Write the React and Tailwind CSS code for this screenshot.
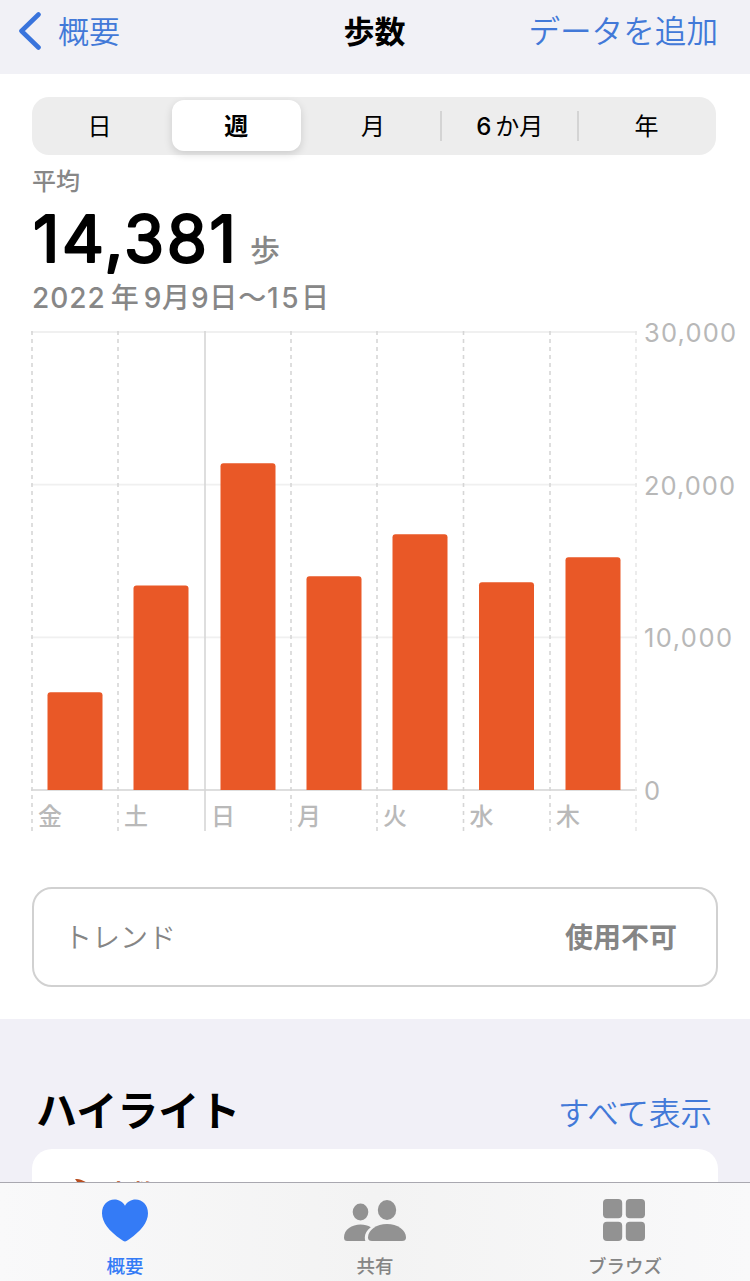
import { useState } from 'react'
import clsx from 'clsx'

const RANGES = ['日', '週', '月', '6か月', '年']

const STEPS = [
  { day: '金', x: 32, value: 6400 },
  { day: '土', x: 118, value: 13400 },
  { day: '日', x: 205, value: 21400, weekStart: true },
  { day: '月', x: 291, value: 14000 },
  { day: '火', x: 377, value: 16750 },
  { day: '水', x: 463.5, value: 13600 },
  { day: '木', x: 550, value: 15250 },
]

const TICKS = [
  { value: 30000, width: 92 },
  { value: 20000, width: 91 },
  { value: 10000, width: 88 },
  { value: 0, width: 16 },
]

const BASE = 478
const toY = (v) => BASE - (v / 30000) * 458

function StepsChart() {
  return (
    <svg width="750" height="528" viewBox="0 0 750 528" className="block overflow-visible font-[Inter,'Noto_Sans_CJK_JP',sans-serif]">
      {/* Grid */}
      {TICKS.map((t) => (
        <line
          key={t.value}
          x1="31" x2="637" y1={toY(t.value)} y2={toY(t.value)}
          stroke={t.value === 0 ? '#dedede' : '#f0f0f0'}
          strokeWidth="1.8"
        />
      ))}
      {STEPS.map((s) => (
        <line
          key={s.day}
          x1={s.x} x2={s.x} y1="19" y2="519"
          stroke="#d6d6d6"
          strokeWidth="1.6"
          strokeDasharray={s.weekStart ? undefined : '4 4'}
        />
      ))}
      <line x1="636" x2="636" y1="19" y2="519" stroke="#e8e8e8" strokeWidth="1.6" strokeDasharray="4 4" />

      {/* Bars */}
      {STEPS.map((s) => {
        const y = toY(s.value)
        return (
          <path
            key={s.day}
            d={`M${s.x + 15.5} ${BASE}V${y + 3}q0-3 3-3h49q3 0 3 3V${BASE}z`}
            fill="#e95827"
          />
        )
      })}

      {/* Labels */}
      {STEPS.map((s) => (
        <text key={s.day} x={s.x + 6} y="513" fontSize="24" fontWeight="500" fill="#b9b9b9">{s.day}</text>
      ))}
      {TICKS.map((t) => (
        <text key={t.value} x="644" y={toY(t.value) + 10} fontSize="25.5" fontWeight="400" textLength={t.width} fill="#b8b8b8">
          {t.value.toLocaleString('en-US')}
        </text>
      ))}
    </svg>
  )
}

function HeartIcon() {
  return (
    <svg width="46" height="43" viewBox="0 0 46 43" fill="#347bf6">
      <path d="M23 42.5C21.8 42.5 20.4 41.5 18.8 40.3C7.4 32 0 23.5 0 14.2C0 6 5.6.5 12.4.5C17 .5 20.7 2.8 23 6.7C25.3 2.8 29 .5 33.6.5C40.4.5 46 6 46 14.2C46 23.5 38.6 32 27.2 40.3C25.6 41.5 24.2 42.5 23 42.5Z" />
    </svg>
  )
}

function PeopleIcon() {
  return (
    <svg width="62" height="43" viewBox="0 0 62 43" fill="#929292">
      <ellipse cx="16.5" cy="13" rx="7.8" ry="8.5" />
      <ellipse cx="43" cy="11" rx="9.2" ry="10" />
      <path d="M0 38.5C0 30.5 8 25.5 16.5 25.5C20.5 25.5 24 26.5 26.8 28.3C23 31 20.8 34.8 20.8 38.5Q20.8 41 21.5 42H3.2Q0 42 0 38.5Z" />
      <path d="M24 38.5C24 31 32.5 25 43 25S62 31 62 38.5Q62 42 58 42H28Q24 42 24 38.5Z" />
    </svg>
  )
}

function GridIcon() {
  return (
    <svg width="42" height="43" viewBox="0 0 42 43" fill="#929292" className="-translate-x-px">
      <rect width="19.2" height="19.2" rx="4" />
      <rect x="22.8" width="19.2" height="19.2" rx="4" />
      <rect y="22.8" width="19.2" height="19.2" rx="4" />
      <rect x="22.8" y="22.8" width="19.2" height="19.2" rx="4" />
    </svg>
  )
}

const TABS = [
  { label: '概要', Icon: HeartIcon },
  { label: '共有', Icon: PeopleIcon },
  { label: 'ブラウズ', Icon: GridIcon },
]

export default function App() {
  const [range, setRange] = useState('週')
  const [tab, setTab] = useState('概要')
  const selected = RANGES.indexOf(range)

  return (
    <div lang="ja" className="relative w-[750px] h-[1281px] overflow-hidden bg-[#f1f0f7] font-[Inter,'Noto_Sans_CJK_JP',sans-serif] text-black">
      {/* Header */}
      <header className="grid grid-cols-3 items-center h-[74px] pb-3 pl-[19px] pr-8 bg-[#f1f1f6]">
        <button className="flex items-center gap-[17px] text-[31px] font-[350] leading-none text-[#4279d8]">
          <svg width="22" height="38" viewBox="0 0 22 38" fill="none" stroke="#3974dc" strokeWidth="4.6" strokeLinecap="round" strokeLinejoin="round">
            <path d="M19.5 2.5L2.5 19L19.5 35.5" />
          </svg>
          概要
        </button>
        <h1 className="text-center text-[31px] font-bold leading-none pl-3">歩数</h1>
        <button className="justify-self-end pt-0.5 whitespace-nowrap text-[31.6px] font-[350] leading-none text-[#4279d8]">データを追加</button>
      </header>

      <main className="h-[945px] bg-white pt-[23px]">
        {/* Range picker */}
        <div className="grid grid-cols-5 w-[684px] h-[58px] mx-8 rounded-[17px] bg-[#ededed]">
          {RANGES.map((r, i) => (
            <div key={r} className="flex items-center">
              <div className={clsx('w-0.5 h-[30px] -ml-0.5', i > 0 && i !== selected && i !== selected + 1 && 'bg-[#d4d4d4]')} />
              <button
                onClick={() => setRange(r)}
                className={clsx(
                  'flex-1 h-[51px] ml-[3px] mr-[5px] mb-px pt-[3px] rounded-xl text-2xl leading-none',
                  r === range ? 'bg-white font-bold shadow-[0_3px_8px_rgba(0,0,0,0.14)]' : 'font-normal'
                )}
              >
                {r === '6か月' ? <><span className="font-medium mr-1">6</span>か月</> : r}
              </button>
            </div>
          ))}
        </div>

        {/* Summary */}
        <div className="pl-8 h-[159px] text-[#878787]">
          <p className="pt-[11px] text-2xl leading-8 font-medium">平均</p>
          <div className="flex h-[84px]">
            <svg width="212" height="84" viewBox="0 0 212 84" className="shrink-0">
              <text
                x="1" y="63.5" fontSize="65" fontWeight="400" textLength="203" lengthAdjust="spacing"
                fill="#000" stroke="#000" strokeWidth="2.2" strokeLinejoin="round"
              >14,381</text>
            </svg>
            <span className="pt-[34px] pl-1.5 text-[30px] leading-9 font-medium">歩</span>
          </div>
          <p className="text-[28px] leading-8 font-medium whitespace-nowrap tracking-[0.8px]">
            <span className="tracking-[1px]">2022</span>
            <span className="ml-[5px] mr-1">年</span>9月9日〜<span className="tracking-[2.6px]">15</span>日
          </p>
        </div>

        <div className="-mt-0.5">
          <StepsChart />
        </div>

        {/* Trend */}
        <div className="flex items-center justify-between w-[686px] h-[100px] mx-8 mt-[47px] pt-[2px] pl-[30px] pr-[39px] rounded-[20px] border-2 border-[#d1d1d1] text-[28px] text-[#858585]">
          <span className="font-[350]">トレンド</span>
          <span className="font-bold">使用不可</span>
        </div>
      </main>

      {/* Highlights */}
      <section className="px-8 pt-[62px]">
        <div className="flex items-center justify-between h-[68px] pb-[7px] pl-1 pr-1.5">
          <h2 className="text-[41px] font-bold leading-none">ハイライト</h2>
          <button className="pt-1 text-[31.5px] font-[350] leading-none text-[#4279d8]">すべて表示</button>
        </div>
        <div className="h-40 rounded-[20px] bg-white pt-[27px] pl-[40px]">
          <div className="flex items-start gap-3 text-[#b84e20]">
            <svg width="22" height="32" viewBox="0 0 22 32" fill="currentColor" className="mt-[3px]">
              <path d="M3 0C14 0 22 8 21 19C20 27 16 31 10 31C4 31 0 27 0 21C0 16 3 15 4 18C5 21 8 20 8 15C9 9 6 4 3 0Z" />
            </svg>
            <span className="text-[25px] leading-9 font-bold">歩数</span>
          </div>
        </div>
      </section>

      {/* Tab bar */}
      <nav className="absolute inset-x-0 bottom-0 grid grid-cols-3 h-[99px] border-t border-[#a9a8b0] bg-linear-to-r from-[#f9f9fa] via-[#f3f3f3] to-[#f9f9fa]">
        {TABS.map(({ label, Icon }) => (
          <button
            key={label}
            onClick={() => setTab(label)}
            className={clsx('flex flex-col items-center pt-4 text-[18.5px] font-medium leading-none', tab === label ? 'text-[#347bf6]' : 'text-[#858585]')}
          >
            <Icon />
            <span className="mt-[15px]">{label}</span>
          </button>
        ))}
      </nav>
    </div>
  )
}
